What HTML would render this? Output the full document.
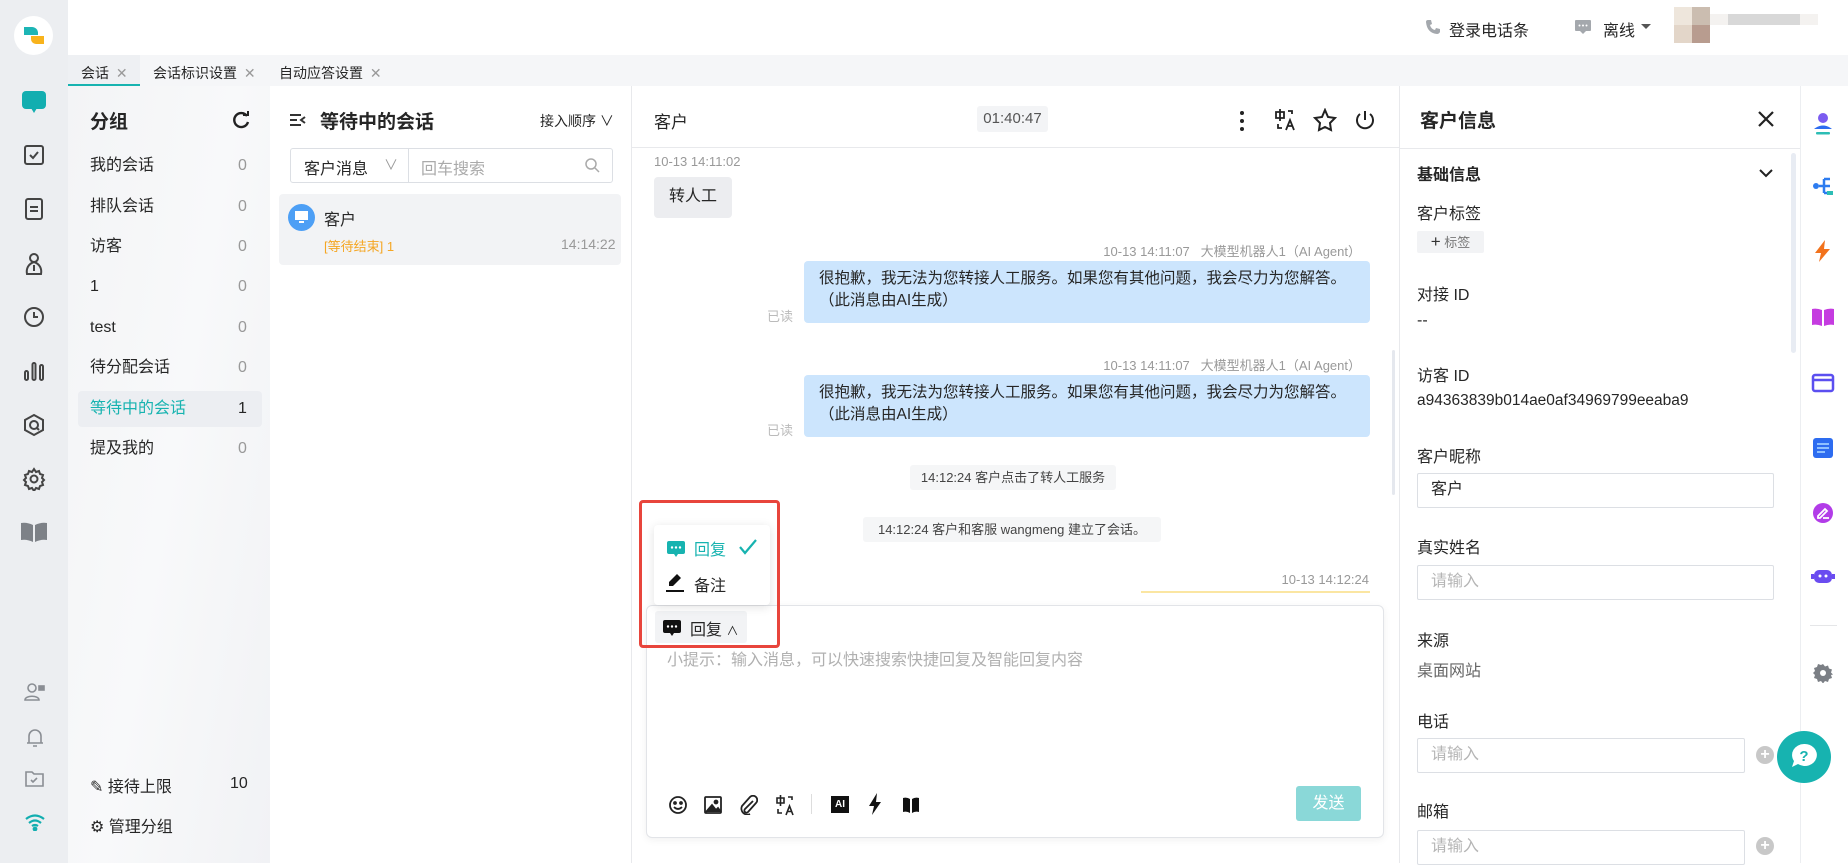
<!DOCTYPE html>
<html><head><meta charset="utf-8"><style>
*{margin:0;padding:0;box-sizing:border-box}
body{width:1848px;height:863px;overflow:hidden;position:relative;background:#fff;font-family:"Liberation Sans","Noto Sans CJK SC",sans-serif;color:#262626;font-size:16px}
.a{position:absolute;white-space:nowrap}
.g{color:#999}
svg{position:absolute}
.gi{fill:none;stroke:#444;stroke-width:2}
.ci .a{margin-top:-2px}
</style></head><body>
<!-- left sidebar -->
<div class="a" style="left:0;top:0;width:68px;height:863px;background:#eceef1"></div>
<div class="a" style="left:14px;top:16px;width:39px;height:39px;border-radius:50%;background:#fff"></div>
<svg style="left:22px;top:25px" width="24" height="22"><path d="M2 2h8a6 6 0 0 1 6 6v2H2z" fill="#1cb5b5"/><path d="M9 11h13v8H14a5 5 0 0 1-5-5z" fill="#f8b31c"/></svg>
<svg style="left:20px;top:89px" width="28" height="26"><rect x="2" y="2" width="24" height="18" rx="4" fill="#12aeb0"/><path d="M11 19l3 5 3-5z" fill="#12aeb0"/></svg>
<svg style="left:22px;top:143px" width="24" height="24" class="gi"><rect x="3" y="3" width="18" height="18" rx="2"/><path d="M8 12l3 3 5-6"/></svg>
<svg style="left:22px;top:197px" width="24" height="24" class="gi"><rect x="4" y="2" width="16" height="20" rx="2"/><path d="M8 10h8M8 14h8"/></svg>
<svg style="left:22px;top:251px" width="24" height="26" class="gi"><circle cx="12" cy="7" r="4"/><path d="M12 11c-6 2-8 7-7 12h14c1-5-1-10-7-12zM12 14v6"/></svg>
<svg style="left:22px;top:305px" width="24" height="24" class="gi"><circle cx="12" cy="12" r="9"/><path d="M12 7v5h4"/></svg>
<svg style="left:22px;top:359px" width="24" height="24" class="gi"><rect x="3" y="12" width="3" height="9" rx="1.5"/><rect x="10.5" y="4" width="3" height="17" rx="1.5"/><rect x="18" y="6" width="3" height="15" rx="1.5"/></svg>
<svg style="left:22px;top:413px" width="24" height="24" class="gi"><path d="M12 2l9 5v10l-9 5-9-5V7z"/><circle cx="12" cy="12" r="4"/><path d="M15 15l2 2"/></svg>
<svg style="left:22px;top:467px" width="24" height="24" class="gi"><circle cx="12" cy="12" r="3.5"/><path d="M12 2l2 3 3-1 1 3 3 1-1 3 2 2-2 2 1 3-3 1-1 3-3-1-2 3-2-3-3 1-1-3-3-1 1-3-2-2 2-2-1-3 3-1 1-3 3 1z"/></svg>
<svg style="left:20px;top:521px" width="28" height="22"><path d="M1 2q6-1 12 2v17q-6-3-12-2z M27 2q-6-1-12 2v17q6-3 12-2z" fill="#7d8187"/></svg>
<svg style="left:24px;top:682px" width="22" height="20" fill="none" stroke="#8a8e94" stroke-width="1.6"><circle cx="8" cy="6" r="4"/><path d="M1 18c0-5 14-5 14 0z"/><rect x="15" y="4" width="5" height="4" fill="#8a8e94"/></svg>
<svg style="left:25px;top:727px" width="20" height="22" fill="none" stroke="#8a8e94" stroke-width="1.6"><path d="M4 16V9a6 6 0 0 1 12 0v7zM2 16h16M8 19h4"/></svg>
<svg style="left:24px;top:769px" width="22" height="20" fill="none" stroke="#8a8e94" stroke-width="1.6"><path d="M2 3h6l2 2h9v12H2z"/><path d="M7 11l2 2 4-4"/></svg>
<svg style="left:24px;top:813px" width="22" height="18" fill="none" stroke="#12aeb0" stroke-width="2.2"><path d="M2 6q9-7 18 0M5 10q6-5 12 0M8 13q3-2 6 0"/><circle cx="11" cy="16" r="1.3" fill="#12aeb0"/></svg>

<!-- top bar -->
<svg style="left:1425px;top:19px" width="16" height="16"><path d="M3 1l3 0 1 4-2 1q1 4 5 5l1-2 4 1v3q-1 2-3 2Q2 14 1 3q0-2 2-2z" fill="#a4a8ad"/></svg>
<div class="a" style="left:1449px;top:17px;font-size:16px">登录电话条</div>
<svg style="left:1574px;top:19px" width="18" height="16"><rect x="1" y="1" width="16" height="11" rx="1" fill="#a4a8ad"/><path d="M6 12l3 3 3-3z" fill="#a4a8ad"/><circle cx="5.5" cy="6.5" r="1" fill="#fff"/><circle cx="9" cy="6.5" r="1" fill="#fff"/><circle cx="12.5" cy="6.5" r="1" fill="#fff"/></svg>
<div class="a" style="left:1603px;top:17px;font-size:16px">离线</div>
<div class="a" style="left:1641px;top:24px;border:5px solid transparent;border-top-color:#555;border-bottom:0"></div>
<div class="a" style="left:1674px;top:7px;width:18px;height:18px;background:#eee6dc"></div>
<div class="a" style="left:1692px;top:7px;width:18px;height:18px;background:#cbbdb0"></div>
<div class="a" style="left:1674px;top:25px;width:18px;height:18px;background:#e3d6c9"></div>
<div class="a" style="left:1692px;top:25px;width:18px;height:18px;background:#b89c8f"></div>
<div class="a" style="left:1710px;top:14px;width:108px;height:11px;background:#f4f2f0"></div>
<div class="a" style="left:1728px;top:14px;width:72px;height:11px;background:#d8d8d8"></div>

<!-- tab bar -->
<div class="a" style="left:68px;top:55px;width:1780px;height:31px;background:#f5f6f8"></div>
<div class="a" style="left:68px;top:55px;width:72px;height:31px;background:#eef0f3;border-bottom:2px solid #17b3b0"></div>
<div class="a" style="left:81px;top:63px;font-size:14px">会话 <span class="g" style="margin-left:3px">✕</span></div>
<div class="a" style="left:153px;top:63px;font-size:14px">会话标识设置 <span class="g" style="margin-left:3px">✕</span></div>
<div class="a" style="left:279px;top:63px;font-size:14px">自动应答设置 <span class="g" style="margin-left:3px">✕</span></div>

<!-- groups -->
<div class="a" style="left:68px;top:86px;width:202px;height:777px;background:linear-gradient(100deg,#f3f4f6,#f8f9fa 50%,#f1f2f5)"></div>
<div class="a" style="left:90px;top:107px;font-size:19px;font-weight:bold">分组</div>
<svg style="left:232px;top:111px" width="18" height="18" fill="none" stroke="#222" stroke-width="2.4"><path d="M15 5A7 7 0 1 0 16 11"/><path d="M11 4h5V0" stroke-width="2"/></svg>
<div class="a" style="left:78px;top:391px;width:184px;height:36px;background:#eceef2;border-radius:4px"></div>
<div class="a" style="left:90px;top:155px;line-height:22px">我的会话</div><div class="a g" style="left:238px;top:157px">0</div>
<div class="a" style="left:90px;top:196px;line-height:22px">排队会话</div><div class="a g" style="left:238px;top:198px">0</div>
<div class="a" style="left:90px;top:236px;line-height:22px">访客</div><div class="a g" style="left:238px;top:238px">0</div>
<div class="a" style="left:90px;top:276px;line-height:22px">1</div><div class="a g" style="left:238px;top:278px">0</div>
<div class="a" style="left:90px;top:317px;line-height:22px">test</div><div class="a g" style="left:238px;top:319px">0</div>
<div class="a" style="left:90px;top:357px;line-height:22px">待分配会话</div><div class="a g" style="left:238px;top:359px">0</div>
<div class="a" style="left:90px;top:398px;line-height:22px;color:#17b3b0">等待中的会话</div><div class="a" style="left:238px;top:400px">1</div>
<div class="a" style="left:90px;top:438px;line-height:22px">提及我的</div><div class="a g" style="left:238px;top:440px">0</div>
<div class="a" style="left:90px;top:773px">✎ 接待上限</div><div class="a" style="left:230px;top:775px">10</div>
<div class="a" style="left:90px;top:813px">⚙ 管理分组</div>

<!-- conversation list -->
<div class="a" style="left:631px;top:86px;width:1px;height:777px;background:#e8e9ec"></div>
<svg style="left:289px;top:113px" width="18" height="14" fill="none" stroke="#333" stroke-width="2"><path d="M1 2h11M1 7h7M1 12h11M16 4l-4 3 4 3"/></svg>
<div class="a" style="left:320px;top:107px;font-size:19px;font-weight:bold">等待中的会话</div>
<div class="a" style="left:540px;top:111px;font-size:14px">接入顺序 ∨</div>
<div class="a" style="left:290px;top:148px;width:323px;height:35px;border:1px solid #dcdfe4;border-radius:3px"></div>
<div class="a" style="left:408px;top:148px;width:1px;height:35px;background:#dcdfe4"></div>
<div class="a" style="left:304px;top:155px;font-size:16px">客户消息</div>
<div class="a g" style="left:384px;top:155px;font-size:14px">∨</div>
<div class="a" style="left:421px;top:155px;color:#aaa">回车搜索</div>
<svg style="left:584px;top:157px" width="16" height="16" fill="none" stroke="#aaa" stroke-width="1.5"><circle cx="7" cy="7" r="5"/><path d="M11 11l4 4"/></svg>
<div class="a" style="left:279px;top:194px;width:342px;height:71px;background:#f2f3f5;border-radius:4px"></div>
<div class="a" style="left:288px;top:204px;width:27px;height:27px;border-radius:50%;background:#4d9ff5"></div>
<svg style="left:294px;top:210px" width="15" height="14"><rect x="1" y="1" width="13" height="9" fill="#fff"/><rect x="5" y="11" width="5" height="2" fill="#fff"/></svg>
<div class="a" style="left:324px;top:206px">客户</div>
<div class="a" style="left:324px;top:236px;font-size:13px;color:#f5a623">[等待结束] 1</div>
<div class="a g" style="left:561px;top:236px;font-size:14px">14:14:22</div>

<!-- chat -->
<div class="a" style="left:654px;top:108px;font-size:17px">客户</div>
<div class="a" style="left:977px;top:106px;width:71px;height:26px;background:#f3f4f6;border-radius:3px;text-align:center;line-height:26px;color:#555;font-size:15px">01:40:47</div>
<svg style="left:1235px;top:110px" width="14" height="22"><circle cx="7" cy="3" r="2" fill="#222"/><circle cx="7" cy="11" r="2" fill="#222"/><circle cx="7" cy="19" r="2" fill="#222"/></svg>
<svg style="left:1274px;top:108px" width="22" height="24" fill="none" stroke="#222" stroke-width="1.8"><path d="M2 4h8v6H2zM6 1v12M14 3h4v3M4 16v4h4"/><path d="M12 22l4-10 4 10M13.5 18h5"/></svg>
<svg style="left:1313px;top:108px" width="24" height="24" fill="none" stroke="#222" stroke-width="2"><path d="M12 2l3 7 7 1-5 5 1 7-6-3-6 3 1-7-5-5 7-1z"/></svg>
<svg style="left:1354px;top:109px" width="22" height="22" fill="none" stroke="#222" stroke-width="2"><path d="M11 2v9M6 5a8 8 0 1 0 10 0"/></svg>
<div class="a" style="left:632px;top:147px;width:767px;height:1px;background:#e8e9ec"></div>

<div class="a g" style="left:654px;top:154px;font-size:13px">10-13 14:11:02</div>
<div class="a" style="left:654px;top:177px;width:78px;height:41px;background:#ecedf0;border-radius:4px;text-align:center;line-height:39px">转人工</div>

<div class="a g" style="right:487px;top:241px;font-size:13px">10-13 14:11:07&nbsp;&nbsp; 大模型机器人1（AI Agent）</div>
<div class="a" style="left:804px;top:261px;width:566px;height:62px;background:#cce5fd;border-radius:4px;padding:7px 15px;line-height:22px;white-space:normal;font-size:15.5px">很抱歉，我无法为您转接人工服务。如果您有其他问题，我会尽力为您解答。<br>（此消息由AI生成）</div>
<div class="a" style="left:767px;top:306px;font-size:13px;color:#bbb">已读</div>

<div class="a g" style="right:487px;top:355px;font-size:13px">10-13 14:11:07&nbsp;&nbsp; 大模型机器人1（AI Agent）</div>
<div class="a" style="left:804px;top:375px;width:566px;height:62px;background:#cce5fd;border-radius:4px;padding:7px 15px;line-height:22px;white-space:normal;font-size:15.5px">很抱歉，我无法为您转接人工服务。如果您有其他问题，我会尽力为您解答。<br>（此消息由AI生成）</div>
<div class="a" style="left:767px;top:420px;font-size:13px;color:#bbb">已读</div>

<div class="a" style="left:910px;top:465px;width:206px;height:25px;background:#f5f6f7;border-radius:3px;text-align:center;line-height:25px;font-size:13px;color:#444">14:12:24 客户点击了转人工服务</div>
<div class="a" style="left:863px;top:517px;width:298px;height:25px;background:#f5f6f7;border-radius:3px;text-align:center;line-height:25px;font-size:13px;color:#444">14:12:24 客户和客服 wangmeng 建立了会话。</div>
<div class="a g" style="right:479px;top:572px;font-size:13px">10-13 14:12:24</div>
<div class="a" style="left:1141px;top:591px;width:229px;height:2px;background:#fbe6a2"></div>
<div class="a" style="left:1392px;top:350px;width:3px;height:145px;background:#e5e8ee;border-radius:2px"></div>

<!-- input -->
<div class="a" style="left:646px;top:605px;width:738px;height:233px;border:1px solid #e2e4e8;border-radius:6px;box-shadow:0 2px 8px rgba(0,0,0,.06);background:#fff"></div>
<div class="a" style="left:655px;top:611px;width:92px;height:32px;background:#f2f3f5;border-radius:3px"></div>
<svg style="left:663px;top:619px" width="18" height="18"><rect x="0" y="1" width="18" height="13" rx="2" fill="#111"/><path d="M7 14l2 3 2-3z" fill="#111"/><circle cx="5" cy="7.5" r="1.2" fill="#fff"/><circle cx="9" cy="7.5" r="1.2" fill="#fff"/><circle cx="13" cy="7.5" r="1.2" fill="#fff"/></svg>
<div class="a" style="left:690px;top:616px;font-size:16px">回复 <span style="font-size:12px">∧</span></div>
<div class="a" style="left:667px;top:646px;color:#b0b0b0">小提示：输入消息，可以快速搜索快捷回复及智能回复内容</div>
<svg style="left:668px;top:795px" width="20" height="20" fill="none" stroke="#222" stroke-width="1.8"><circle cx="10" cy="10" r="8"/><circle cx="7" cy="8" r="1" fill="#222"/><circle cx="13" cy="8" r="1" fill="#222"/><path d="M6 12q4 4 8 0"/></svg>
<svg style="left:703px;top:795px" width="20" height="20" fill="none" stroke="#222" stroke-width="1.8"><rect x="2" y="2" width="16" height="16" rx="1"/><path d="M3 17l6-7 4 5 2-2 3 4" fill="#222"/><circle cx="13" cy="7" r="1.5" fill="#222"/></svg>
<svg style="left:738px;top:795px" width="20" height="20" fill="none" stroke="#222" stroke-width="1.8"><path d="M15 6l-8 8a2 2 0 0 0 3 3l8-9a4 4 0 0 0-6-6L4 11a6 6 0 0 0 8 8"/></svg>
<svg style="left:775px;top:794px" width="20" height="22" fill="none" stroke="#222" stroke-width="1.6"><path d="M2 4h7v5H2zM5.5 1v11M13 3h4v3M3 15v4h4"/><path d="M11 21l3.5-9 3.5 9M12.3 17.5h4.5"/></svg>
<div class="a" style="left:811px;top:794px;width:1px;height:20px;background:#ddd"></div>
<div class="a" style="left:831px;top:796px;width:18px;height:17px;background:#111;color:#fff;font-size:10px;font-weight:bold;text-align:center;line-height:17px">AI</div>
<svg style="left:868px;top:793px" width="14" height="22"><path d="M9 0L1 13h5l-2 9 9-13H8z" fill="#111"/></svg>
<svg style="left:902px;top:796px" width="18" height="18"><path d="M1 2q4-1 7 1v14q-3-2-7-1zM17 2q-4-1-7 1v14q3-2 7-1z" fill="#111"/></svg>
<div class="a" style="left:1296px;top:786px;width:65px;height:35px;background:#8ad8d8;border-radius:3px;color:#fff;text-align:center;line-height:35px;font-size:16px">发送</div>

<!-- popup -->
<div class="a" style="left:654px;top:525px;width:116px;height:80px;background:#fff;border-radius:4px;box-shadow:0 2px 10px rgba(0,0,0,.12)"></div>
<svg style="left:667px;top:540px" width="18" height="18"><rect x="0" y="1" width="18" height="13" rx="2" fill="#17b3b0"/><path d="M7 14l2 3 2-3z" fill="#17b3b0"/><circle cx="5" cy="7.5" r="1.2" fill="#fff"/><circle cx="9" cy="7.5" r="1.2" fill="#fff"/><circle cx="13" cy="7.5" r="1.2" fill="#fff"/></svg>
<div class="a" style="left:694px;top:536px;color:#17b3b0">回复</div>
<svg style="left:738px;top:538px" width="20" height="18" fill="none" stroke="#17b3b0" stroke-width="2.2"><path d="M2 9l5 6 11-13"/></svg>
<svg style="left:666px;top:573px" width="18" height="20"><path d="M11 1l4 4-8 8H3V9z" fill="#111"/><rect x="0" y="17" width="18" height="2" fill="#111"/></svg>
<div class="a" style="left:694px;top:572px">备注</div>
<div class="a" style="left:639px;top:500px;width:141px;height:148px;border:3px solid #e8453c;border-radius:4px"></div>

<!-- customer info -->
<div class="a" style="left:1399px;top:86px;width:1px;height:777px;background:#e8e9ec"></div>
<div class="ci">
<div class="a" style="left:1420px;top:108px;font-size:19px;font-weight:bold">客户信息</div>
<div class="a" style="left:1417px;top:163px;font-weight:bold">基础信息</div>
<div class="a" style="left:1417px;top:202px">客户标签</div>
<div class="a" style="left:1417px;top:283px">对接 ID</div>
<div class="a" style="left:1417px;top:314px">--</div>
<div class="a" style="left:1417px;top:364px">访客 ID</div>
<div class="a" style="left:1417px;top:394px;font-size:15.5px">a94363839b014ae0af34969799eeaba9</div>
<div class="a" style="left:1417px;top:445px">客户昵称</div>
<div class="a" style="left:1417px;top:536px">真实姓名</div>
<div class="a" style="left:1417px;top:629px">来源</div>
<div class="a" style="left:1417px;top:659px;color:#666">桌面网站</div>
<div class="a" style="left:1417px;top:710px">电话</div>
<div class="a" style="left:1417px;top:800px">邮箱</div>
</div>
<svg style="left:1757px;top:110px" width="18" height="18" stroke="#222" stroke-width="2.2"><path d="M2 2l14 14M16 2L2 16"/></svg>
<div class="a" style="left:1399px;top:148px;width:401px;height:1px;background:#e8e9ec"></div>
<div class="a" style="left:1791px;top:153px;width:5px;height:200px;background:#e8ecf3;border-radius:3px"></div>
<svg style="left:1758px;top:168px" width="16" height="10" fill="none" stroke="#222" stroke-width="2"><path d="M2 2l6 6 6-6"/></svg>
<div class="a" style="left:1417px;top:231px;width:67px;height:22px;background:#f2f3f5;border-radius:2px;font-size:13px;color:#777;text-align:center;line-height:22px"><span style="font-size:17px;color:#333">+</span> 标签</div>
<div class="a" style="left:1417px;top:473px;width:357px;height:35px;border:1px solid #dcdfe4;border-radius:2px;padding-left:13px;line-height:32px">客户</div>
<div class="a" style="left:1417px;top:565px;width:357px;height:35px;border:1px solid #dcdfe4;border-radius:2px;padding-left:13px;line-height:32px;color:#b5b5b5">请输入</div>
<div class="a" style="left:1417px;top:738px;width:328px;height:35px;border:1px solid #dcdfe4;border-radius:2px;padding-left:13px;line-height:32px;color:#b5b5b5">请输入</div>
<div class="a" style="left:1756px;top:746px;width:18px;height:18px;border-radius:50%;background:#c8c8c8;color:#fff;text-align:center;line-height:18px;font-weight:bold">+</div>
<div class="a" style="left:1417px;top:830px;width:328px;height:35px;border:1px solid #dcdfe4;border-radius:2px;padding-left:13px;line-height:32px;color:#b5b5b5">请输入</div>
<div class="a" style="left:1756px;top:837px;width:18px;height:18px;border-radius:50%;background:#c8c8c8;color:#fff;text-align:center;line-height:18px;font-weight:bold">+</div>

<!-- right bar -->
<div class="a" style="left:1800px;top:86px;width:1px;height:777px;background:#eceef1"></div>
<svg style="left:1813px;top:112px" width="20" height="24"><circle cx="10" cy="6" r="5" fill="#7b5cf0"/><path d="M1 17q9-7 18 0z" fill="#2d6cf0"/><rect x="3" y="20" width="14" height="2.5" rx="1" fill="#2dbdb5"/></svg>
<svg style="left:1812px;top:176px" width="22" height="20"><circle cx="4" cy="10" r="3" fill="#2d7cf0"/><path d="M7 10h5M12 3v14M12 3h6M12 10h6M12 17h6" stroke="#2d7cf0" stroke-width="2.5" fill="none"/><rect x="15" y="15" width="6" height="4" fill="#2dbdb5"/></svg>
<svg style="left:1814px;top:240px" width="18" height="22"><path d="M11 0L1 13h6l-2 9 11-13H10z" fill="#f2721c"/></svg>
<svg style="left:1811px;top:307px" width="24" height="20"><path d="M1 2q5-1 10 1v16q-5-2-10-1zM23 2q-5-1-10 1v16q5-2 10-1z" fill="#c53ce0"/></svg>
<svg style="left:1811px;top:373px" width="24" height="20" fill="none" stroke="#5b4ff0" stroke-width="2.5"><rect x="2" y="2" width="20" height="16" rx="2"/><path d="M2 7h20"/></svg>
<svg style="left:1812px;top:437px" width="22" height="22"><rect x="1" y="1" width="20" height="20" rx="3" fill="#2d6cf0"/><path d="M5 7h12M5 11h12M5 15h8" stroke="#8ec0ff" stroke-width="2"/></svg>
<svg style="left:1812px;top:502px" width="22" height="22"><circle cx="11" cy="11" r="10" fill="#b23ce8"/><path d="M6 14l7-7 2 2-7 7H6zM11 16h6" stroke="#fff" stroke-width="1.8" fill="none"/></svg>
<svg style="left:1811px;top:566px" width="24" height="20"><rect x="3" y="4" width="18" height="13" rx="5" fill="#6a4cf0"/><rect x="0" y="8" width="3" height="5" fill="#6a4cf0"/><rect x="21" y="8" width="3" height="5" fill="#6a4cf0"/><circle cx="9" cy="10" r="1.5" fill="#fff"/><circle cx="15" cy="10" r="1.5" fill="#fff"/></svg>
<div class="a" style="left:1810px;top:625px;width:27px;height:1px;background:#e5e6e8"></div>
<svg style="left:1813px;top:663px" width="20" height="20"><path d="M10 1l2 2.5 3-1 1 3 3 1-1 3 2 2-2 .5 1 3-3 1-1 3-3-1-2 2.5-2-2.5-3 1-1-3-3-1 1-3L0 10l2-2-1-3 3-1 1-3 3 1z" fill="#7b7f85"/><circle cx="10" cy="10" r="3" fill="#fff"/></svg>
<div class="a" style="left:1777px;top:731px;width:54px;height:52px;border-radius:50%;background:#17b3b0"></div>
<svg style="left:1789px;top:742px" width="30" height="28"><path d="M15 2a12 11 0 1 1-6 20l-6 3 2-6A12 11 0 0 1 15 2z" fill="#fff"/><text x="15" y="19" text-anchor="middle" font-family="Liberation Sans" font-weight="bold" font-size="15" fill="#17b3b0">?</text></svg>
</body></html>
